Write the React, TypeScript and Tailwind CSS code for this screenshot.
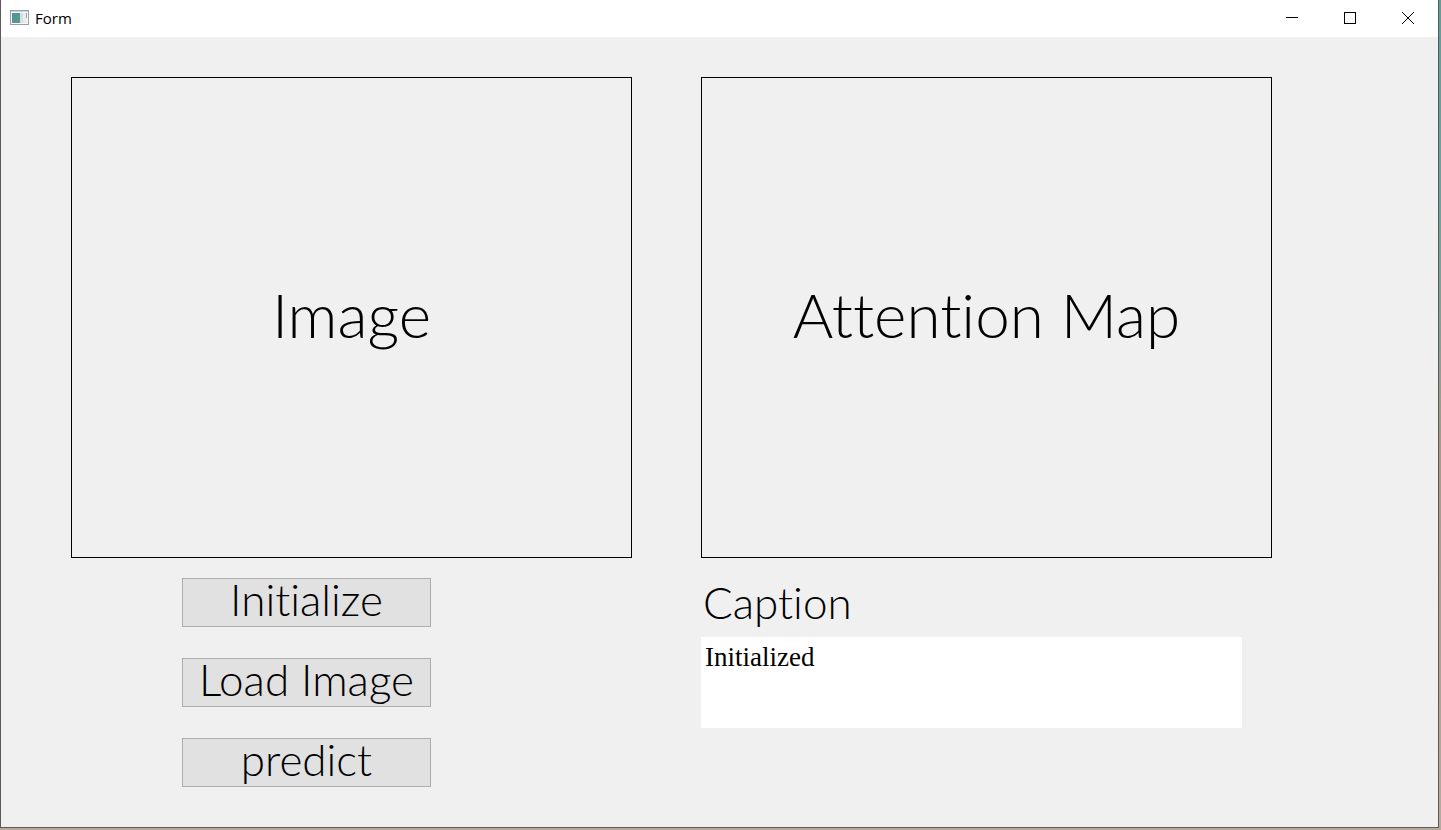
import type { ReactNode } from "react";

function AppIcon() {
  return (
    <svg width="20" height="16" viewBox="0 0 20 16" aria-hidden="true">
      <defs>
        <linearGradient id="pane" x1="0" y1="0" x2="1" y2="1">
          <stop offset="0" stopColor="#4f8fa0" />
          <stop offset="1" stopColor="#58a184" />
        </linearGradient>
      </defs>
      <rect x="0.5" y="0.5" width="18" height="14" fill="#f7f8f9" stroke="#9a9fa5" />
      <rect x="1" y="1" width="17" height="1" fill="#c5d3da" />
      <rect x="2" y="3" width="8" height="10" fill="url(#pane)" />
      <rect x="10" y="3" width="3" height="10" fill="#d5dee3" />
      <rect x="13" y="3" width="4" height="10" fill="#e9edf0" />
      <rect x="16" y="3" width="1" height="5" fill="#8aa79d" />
    </svg>
  );
}

function WindowButton({ label, children }: { label: string; children: ReactNode }) {
  return (
    <button type="button" aria-label={label} className="flex h-full w-[58px] items-center justify-center hover:bg-gray-200">
      <svg width="12" height="12" viewBox="0 0 12 12" fill="none" stroke="#000" aria-hidden="true">
        {children}
      </svg>
    </button>
  );
}

function TitleBar() {
  return (
    <header className="flex h-[37px] items-center bg-white pb-px pl-[9px]">
      <AppIcon />
      <h1 className="ml-[5px] grow font-['Open_Sans',sans-serif] text-[15px] leading-5 text-black">Form</h1>
      <div className="flex h-full pr-px">
        <WindowButton label="Minimize">
          <path d="M0 5.5h12" />
        </WindowButton>
        <WindowButton label="Maximize">
          <rect x="0.5" y="0.5" width="11" height="11" />
        </WindowButton>
        <WindowButton label="Close">
          <path d="M0 0l12 12M12 0L0 12" />
        </WindowButton>
      </div>
    </header>
  );
}

function Preview({ title }: { title: string }) {
  return (
    <section className="flex h-[481px] items-center justify-center border border-black pb-2">
      <h2 className="text-[62px] leading-[72px]">{title}</h2>
    </section>
  );
}

function ActionButton({ label }: { label: string }) {
  return (
    <button
      type="button"
      className="flex h-[49px] w-[249px] items-center justify-center border border-[#adadad] bg-[#e1e1e1] pb-2 text-[44px] leading-[44px] hover:bg-[#e5f1fb]"
    >
      {label}
    </button>
  );
}

export default function App() {
  return (
    <div className="flex min-h-screen flex-col bg-[linear-gradient(#5f9f97,#6aa59c_25%,#a99a8a_55%,#b5aa9c)] pr-[2px] pb-[2px]">
      <div className="flex grow flex-col border-r border-b border-l border-[#5a5a5a] bg-[#f0f0f0]">
        <TitleBar />
        <main className="grid grid-cols-[561fr_571fr] gap-x-[69px] gap-y-5 pt-10 pr-[166px] pb-10 pl-[70px] font-['Ink_Free','Lato',sans-serif] font-light text-black [font-variant-ligatures:none]">
          <Preview title="Image" />
          <Preview title="Attention Map" />
          <div className="flex flex-col gap-[31px] pl-[111px]">
            <ActionButton label="Initialize" />
            <ActionButton label="Load Image" />
            <ActionButton label="predict" />
          </div>
          <div className="flex flex-col pr-[30px]">
            <label htmlFor="caption" className="pb-[10px] pl-[2px] text-[44px] leading-[49px]">
              Caption
            </label>
            <textarea
              id="caption"
              defaultValue="Initialized"
              className="h-[91px] w-full resize-none bg-white px-1 py-1 font-['Liberation_Serif',serif] text-[27px] leading-8 font-normal outline-none"
            />
          </div>
        </main>
      </div>
    </div>
  );
}
